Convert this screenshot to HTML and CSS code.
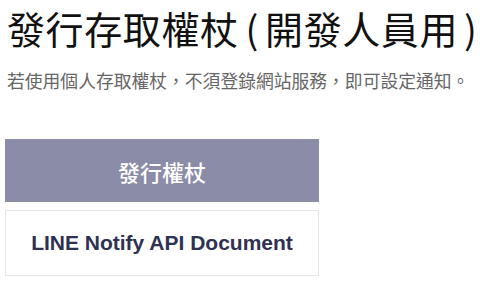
FILE: index.html
```html
<!DOCTYPE html>
<html lang="zh-Hant">

<head>
  <meta charset="UTF-8" />
  <title>發行存取權杖(開發人員用)</title>
  <link rel="stylesheet" href="styles.css">
</head>

<body>
  <div class="page">
    <h1 class="title">發行存取權杖<span class="paren open">(</span>開發人員用<span class="paren close">)</span></h1>
    <p class="lead">若使用個人存取權杖，不須登錄網站服務，即可設定通知。</p>

    <!-- actions -->
    <div class="actions">
      <a class="btn btn-primary" href="#">發行權杖</a>
      <a class="btn btn-outline" href="#">LINE Notify API Document</a>
    </div>
  </div>
</body>

</html>
```

FILE: styles.css
```css
body {
  margin: 0;
  background: #fff;
  font-family: "Noto Sans CJK TC", "Noto Sans", sans-serif;
  color: #111;
}

.page {
  padding: 0 5px;
}

.title {
  margin: 0;
  padding-left: 2px;
  font-size: 38px;
  font-weight: 400;
  line-height: 55px;
  letter-spacing: 0.6px;
  white-space: nowrap;
}

.paren.open {
  padding: 0 6px 0 7px;
}

.paren.close {
  padding-left: 6px;
}

.lead {
  margin: 12px 0 0 2px;
  font-size: 17.8px;
  line-height: 26px;
  color: #666;
  white-space: nowrap;
}

.actions {
  margin-top: 46px;
  width: 314px;
  display: flex;
  flex-direction: column;
  gap: 8px;
}

.btn {
  display: flex;
  align-items: center;
  justify-content: center;
  box-sizing: border-box;
  text-decoration: none;
}

.btn-primary {
  height: 63px;
  background: #8b8ca8;
  color: #fff;
  font-size: 22px;
  font-weight: 500;
}

.btn-outline {
  height: 66px;
  border: 1px solid #e6e6e6;
  color: #2e3152;
  font-family: "Liberation Sans", Arial, sans-serif;
  font-size: 21px;
  font-weight: 700;
}
```
